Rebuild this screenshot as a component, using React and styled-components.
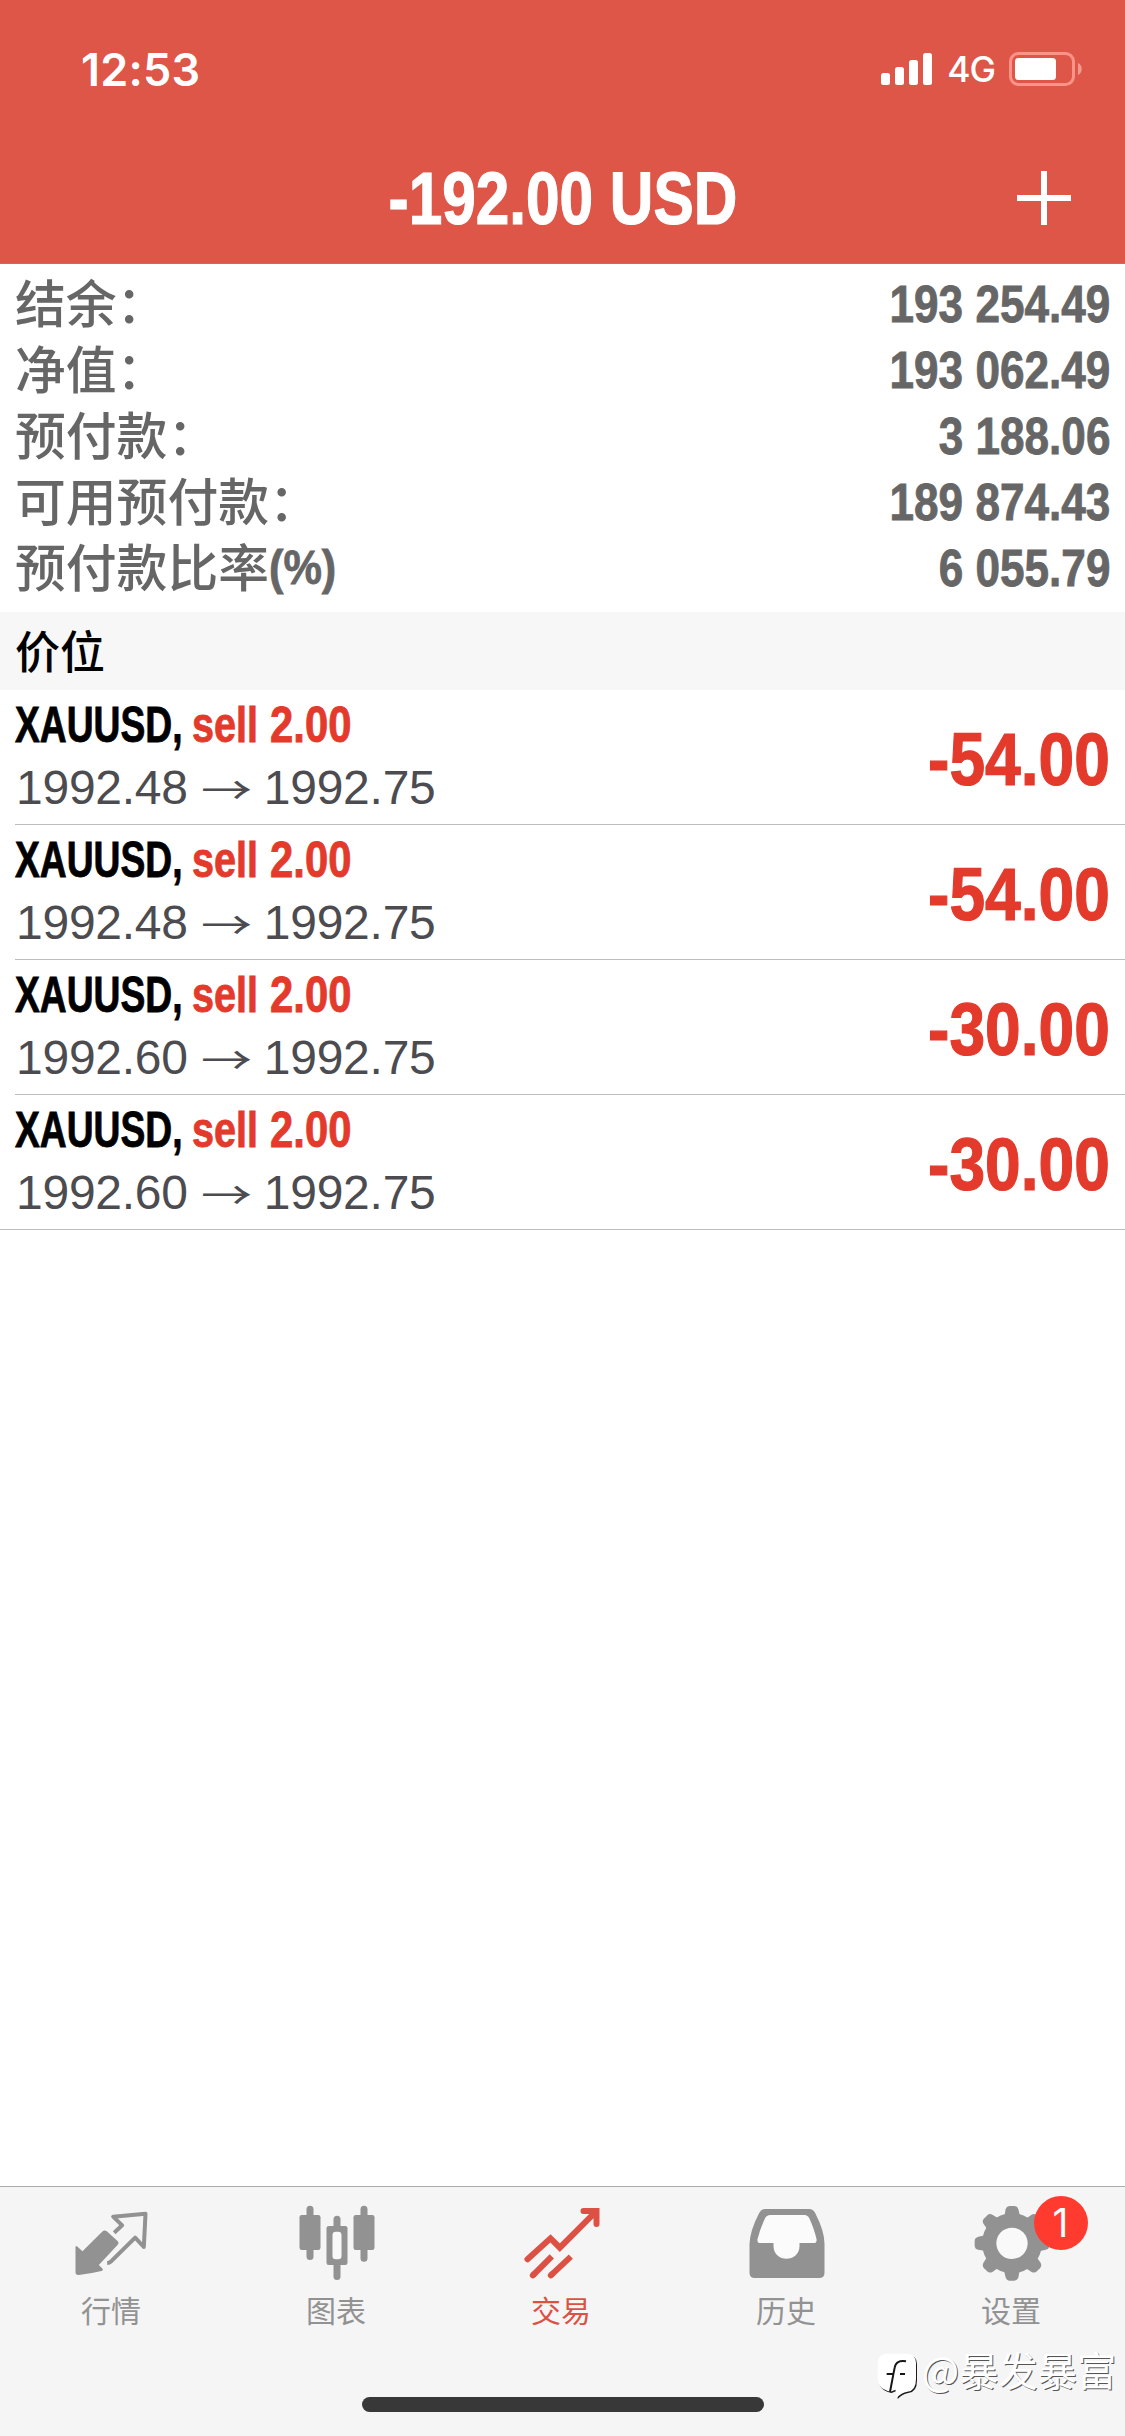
import React from "react";
import styled, { createGlobalStyle } from "styled-components";

const latin = '"Liberation Sans", "Noto Sans CJK SC", sans-serif';
const cjk = '"Noto Sans CJK SC", sans-serif';

const GlobalStyle = createGlobalStyle`
  * { box-sizing: border-box; }
  body { margin: 0; background: #fff; }
`;

const Screen = styled.div`
  position: relative;
  width: 1125px;
  height: 2436px;
  display: flex;
  flex-direction: column;
  overflow: hidden;
  background: #fff;
  font-family: ${latin};
`;

const Header = styled.header`
  height: 264px;
  flex: none;
  background: #dd5647;
  border-bottom: 1px solid #d0675b;
  color: #fff;
`;

const StatusBar = styled.div`
  height: 132px;
  display: flex;
  justify-content: space-between;
  align-items: flex-start;
  padding: 43px 42px 0 81px;
  font-family: Inter, sans-serif;
`;

const Clock = styled.span`
  font-size: 45px;
  line-height: 53px;
  font-weight: 600;
  letter-spacing: 0.2px;
`;

const StatusIcons = styled.div`
  display: flex;
  align-items: center;
  height: 52px;
`;

const Network = styled.span`
  margin: 2px 14px 0 14px;
  font-size: 35.5px;
  font-weight: 500;
  line-height: 50px;
  letter-spacing: -1px;
`;

const NavBar = styled.div`
  height: 131px;
  display: grid;
  grid-template-columns: 108px 1fr 108px;
  align-items: center;
  justify-items: center;
`;

const Condensed = styled.span`
  display: inline-block;
  white-space: pre;
  font-weight: 700;
  font-size: ${(p) => p.$size}px;
  -webkit-text-stroke: ${(p) => p.$size / 60}px currentColor;
  transform: scaleX(${(p) => p.$scale});
  transform-origin: ${(p) => p.$origin || "left"} center;
`;

const Title = styled.h1`
  margin: 0;
  padding-top: 3px;
  line-height: 84px;
  color: #fff;
  font-size: 74px;
`;

const AddButton = styled.button`
  padding: 0;
  border: 0;
  background: none;
  display: flex;
  width: 54px;
  height: 54px;
  margin-right: 54px;
`;

const Summary = styled.section`
  height: 348px;
  padding: 7px 15px 0;
  color: #666;
`;

const SummaryRow = styled.div`
  height: 66px;
  display: flex;
  justify-content: space-between;
  line-height: 66px;
`;

const SummaryLabel = styled.span`
  font-family: ${latin};
  font-size: 50.8px;
  font-weight: 500;
  line-height: 69px;
  white-space: nowrap;
`;

const Unit = styled(Condensed)`
  line-height: 60px;
  vertical-align: 3px;
`;

const SectionHeader = styled.h2`
  height: 78px;
  margin: 0;
  padding: 0 15px;
  background: #f7f7f7;
  color: #000;
  font-family: ${cjk};
  font-size: 45px;
  font-weight: 500;
  line-height: 76px;
`;

const List = styled.ul`
  flex: 1;
  margin: 0;
  padding: 0;
  list-style: none;
`;

const Position = styled.li`
  height: 135px;
  margin-left: ${(p) => (p.$last ? 0 : 15)}px;
  padding: 0 15px 0 ${(p) => (p.$last ? 15 : 0)}px;
  border-bottom: 1px solid #bdbdbf;
  display: flex;
  justify-content: space-between;
`;

const Details = styled.div`
  display: flex;
  flex-direction: column;
`;

const Deal = styled.div`
  height: 68px;
  line-height: 69px;
  display: flex;
`;

const Symbol = styled.span`
  width: 177px;
  color: #000;
`;

const Side = styled.span`
  width: 78px;
  color: #e33a2c;
`;

const Volume = styled.span`
  color: #e33a2c;
`;

const Prices = styled.div`
  display: flex;
  align-items: center;
  height: 59px;
  padding-left: 1px;
  line-height: 59px;
  font-size: 48px;
  letter-spacing: -0.25px;
  color: #4c4c50;
`;

const Arrow = styled.span`
  width: 76px;
  padding-left: 1px;
  text-align: center;
  font-family: ${cjk};
  font-size: 51px;
  line-height: 50px;
  transform: scaleY(0.74);
`;

const Profit = styled.span`
  line-height: 139px;
  color: #e33a2c;
`;

const TabBar = styled.nav`
  height: 250px;
  flex: none;
  display: flex;
  flex-direction: column;
  align-items: center;
  background: #f5f5f5;
  border-top: 1px solid #acacac;
`;

const Tabs = styled.div`
  width: 100%;
  height: 210px;
  display: grid;
  grid-template-columns: repeat(5, 1fr);
`;

const Tab = styled.div`
  display: flex;
  flex-direction: column;
  align-items: center;
  padding-top: 13px;
  color: ${(p) => (p.$active ? "#dd5145" : "#929292")};
`;

const TabLabel = styled.span`
  margin: 3px 3px 0 0;
  font-family: ${cjk};
  font-size: 30px;
  line-height: 44px;
`;

const IconBox = styled.div`
  position: relative;
  width: 84px;
  height: 84px;
  & > svg { display: block; }
`;

const Badge = styled.span`
  position: absolute;
  left: 63px;
  top: -4px;
  width: 54px;
  height: 54px;
  border-radius: 50%;
  background: #ff3b30;
  color: #fff;
  font: 400 39px/53px Inter, sans-serif;
  text-align: center;
`;

const HomeIndicator = styled.div`
  width: 402px;
  height: 15px;
  border-radius: 8px;
  background: #383838;
`;

const Watermark = styled.div`
  position: absolute;
  left: 877px;
  top: 2345px;
  display: flex;
  align-items: flex-start;
  height: 58px;
  color: #fff;
  font-family: ${cjk};
  font-size: 39.3px;
  line-height: 48px;
  text-shadow: 1px 1px 0 #555;
  white-space: nowrap;
  & > svg { margin: 8px 4px 0 0; }
`;

const SignalIcon = () => (
  <svg width="52" height="34" viewBox="0 0 52 34" fill="#fff">
    <rect x="0" y="21" width="9" height="12" rx="2.5" />
    <rect x="14" y="15" width="9" height="18" rx="2.5" />
    <rect x="28" y="8" width="9" height="25" rx="2.5" />
    <rect x="42" y="1" width="9" height="32" rx="2.5" />
  </svg>
);

const BatteryIcon = () => (
  <svg width="74" height="34" viewBox="0 0 74 34">
    <rect x="1.5" y="1.5" width="63" height="31" rx="8" fill="none" stroke="#fb9388" strokeWidth="3" />
    <rect x="6" y="6" width="41" height="22" rx="3.5" fill="#fff" />
    <path d="M69 11C74 13 74 21 69 23Z" fill="#f39a90" />
  </svg>
);

const PlusIcon = () => (
  <svg width="54" height="54" viewBox="0 0 54 54">
    <path d="M27 0V54M0 27H54" stroke="#fff" strokeWidth="6" />
  </svg>
);

const QuotesIcon = () => (
  <svg width="84" height="84" viewBox="211.5 90 252 252" fill="none">
    <path fill="currentColor" d="M225 231Q226 225 231 230L246 244L305 185Q312 178 319 184L351 213Q357 219 351 225L295 285L305 295Q310 301 303 303Q270 311 235 315Q225 316 225 307Z" />
    <path stroke="currentColor" strokeWidth="12" strokeLinejoin="round" d="M341 188L365 166L338 140L435 131L430 231L404 203L331 275Q327 279 320 279" />
  </svg>
);

const ChartsIcon = () => (
  <svg width="84" height="84" viewBox="886.5 90 252 252" fill="currentColor">
    <rect x="897" y="135" width="63" height="105" rx="7" />
    <rect x="918" y="107" width="21" height="163" rx="10.5" />
    <rect x="1059" y="135" width="63" height="105" rx="7" />
    <rect x="1080" y="107" width="21" height="168" rx="10.5" />
    <rect x="999" y="137" width="21" height="45" rx="10.5" />
    <rect x="999" y="270" width="21" height="60" rx="10.5" />
    <rect x="978" y="168" width="63" height="117" rx="7" />
    <rect x="996" y="185" width="27" height="83" rx="10" fill="#f9f9f9" />
  </svg>
);

const TradeIcon = () => (
  <svg width="84" height="84" viewBox="211.5 90 252 252" fill="none" stroke="currentColor" strokeWidth="18">
    <path strokeLinecap="round" d="M231 268L300 205L328 233L436 125M399 123H438V162" />
    <path strokeLinecap="round" d="M247 316L251 312M301 316L305 312" />
    <path d="M247 316L304 259M301 316L361 260" />
  </svg>
);

const HistoryIcon = () => (
  <svg width="84" height="84" viewBox="886.5 90 252 252">
    <path fill="currentColor" d="M944 117H1076Q1088 117 1094 129Q1122 183 1122 222V308Q1122 324 1106 324H913Q897 324 897 308V222Q898 183 926 129Q932 117 944 117Z" />
    <path fill="#fbfbfb" d="M960 135H1062Q1072 135 1077 146Q1092 179 1098 207Q1100 219 1089 219H1047V228C1047 279 969 279 969 228V219H930Q919 219 921 207Q928 179 943 146Q948 135 960 135Z" />
  </svg>
);

const tooth = "M460 150L465 119Q468 108 478 108H491Q501 108 504 119L511 150Z";

const SettingsIcon = () => (
  <svg width="84" height="84" viewBox="361.5 90 252 252" fill="currentColor">
    <circle cx="484.5" cy="220" r="90" />
    {[0, 45, 90, 135, 180, 225, 270, 315].map((a) => (
      <path key={a} d={tooth} transform={`rotate(${a} 484.5 220)`} />
    ))}
    <circle cx="484.5" cy="220" r="47" fill="#f9f9f9" />
  </svg>
);

const bubble = "M50 42H112Q138 43 138 70V118Q138 154 112 156Q94 159 80 174Q80 160 76 150L62 156Q24 148 23 118V70Q24 43 50 42Z";

const WatermarkLogo = () => (
  <svg width="41" height="47" viewBox="21 40 123 141">
    <path transform="translate(3 4)" fill="#1c1c1c" d={bubble} />
    <path fill="#fff" d={bubble} />
    <path fill="none" stroke="#161616" strokeWidth="6" d="M108 65Q78 60 74 84L70 104L60 157M50 103H72M90 103H105" />
  </svg>
);

const summary = [
  ["结余：", "193 254.49"],
  ["净值：", "193 062.49"],
  ["预付款：", "3 188.06"],
  ["可用预付款：", "189 874.43"],
  ["预付款比率", "6 055.79", "(%)"],
];

const positions = [
  { open: "1992.48", now: "1992.75", profit: "-54.00" },
  { open: "1992.48", now: "1992.75", profit: "-54.00" },
  { open: "1992.60", now: "1992.75", profit: "-30.00" },
  { open: "1992.60", now: "1992.75", profit: "-30.00" },
];

const tabs = [
  { label: "行情", Icon: QuotesIcon },
  { label: "图表", Icon: ChartsIcon },
  { label: "交易", Icon: TradeIcon, active: true },
  { label: "历史", Icon: HistoryIcon },
  { label: "设置", Icon: SettingsIcon, badge: "1" },
];

export default function App() {
  return (
    <Screen>
      <GlobalStyle />
      <Header>
        <StatusBar>
          <Clock>12:53</Clock>
          <StatusIcons>
            <SignalIcon />
            <Network>4G</Network>
            <BatteryIcon />
          </StatusIcons>
        </StatusBar>
        <NavBar>
          <span />
          <Title>
            <Condensed $size={74} $scale={0.815} $origin="center">-192.00 USD</Condensed>
          </Title>
          <AddButton aria-label="+">
            <PlusIcon />
          </AddButton>
        </NavBar>
      </Header>

      <Summary>
        {summary.map(([label, value, unit]) => (
          <SummaryRow key={label}>
            <SummaryLabel>
              {label}
              {unit && <Unit $size={48} $scale={0.9}>{unit}</Unit>}
            </SummaryLabel>
            <Condensed $size={52} $scale={0.848} $origin="right">{value}</Condensed>
          </SummaryRow>
        ))}
      </Summary>

      <SectionHeader>价位</SectionHeader>

      <List>
        {positions.map((p, i) => (
          <Position key={i} $last={i === positions.length - 1}>
            <Details>
              <Deal>
                <Symbol><Condensed $size={49.5} $scale={0.752}>XAUUSD,</Condensed></Symbol>
                <Side><Condensed $size={49.5} $scale={0.8}>sell</Condensed></Side>
                <Volume><Condensed $size={49.5} $scale={0.845}>2.00</Condensed></Volume>
              </Deal>
              <Prices>
                <span>{p.open}</span>
                <Arrow>→</Arrow>
                <span>{p.now}</span>
              </Prices>
            </Details>
            <Profit>
              <Condensed $size={74} $scale={0.866} $origin="right">{p.profit}</Condensed>
            </Profit>
          </Position>
        ))}
      </List>

      <TabBar>
        <Tabs>
          {tabs.map(({ label, Icon, active, badge }) => (
            <Tab key={label} $active={active}>
              <IconBox>
                <Icon />
                {badge && <Badge>{badge}</Badge>}
              </IconBox>
              <TabLabel>{label}</TabLabel>
            </Tab>
          ))}
        </Tabs>
        <HomeIndicator />
      </TabBar>

      <Watermark>
        <WatermarkLogo />
        <span>@暴发暴富</span>
      </Watermark>
    </Screen>
  );
}
